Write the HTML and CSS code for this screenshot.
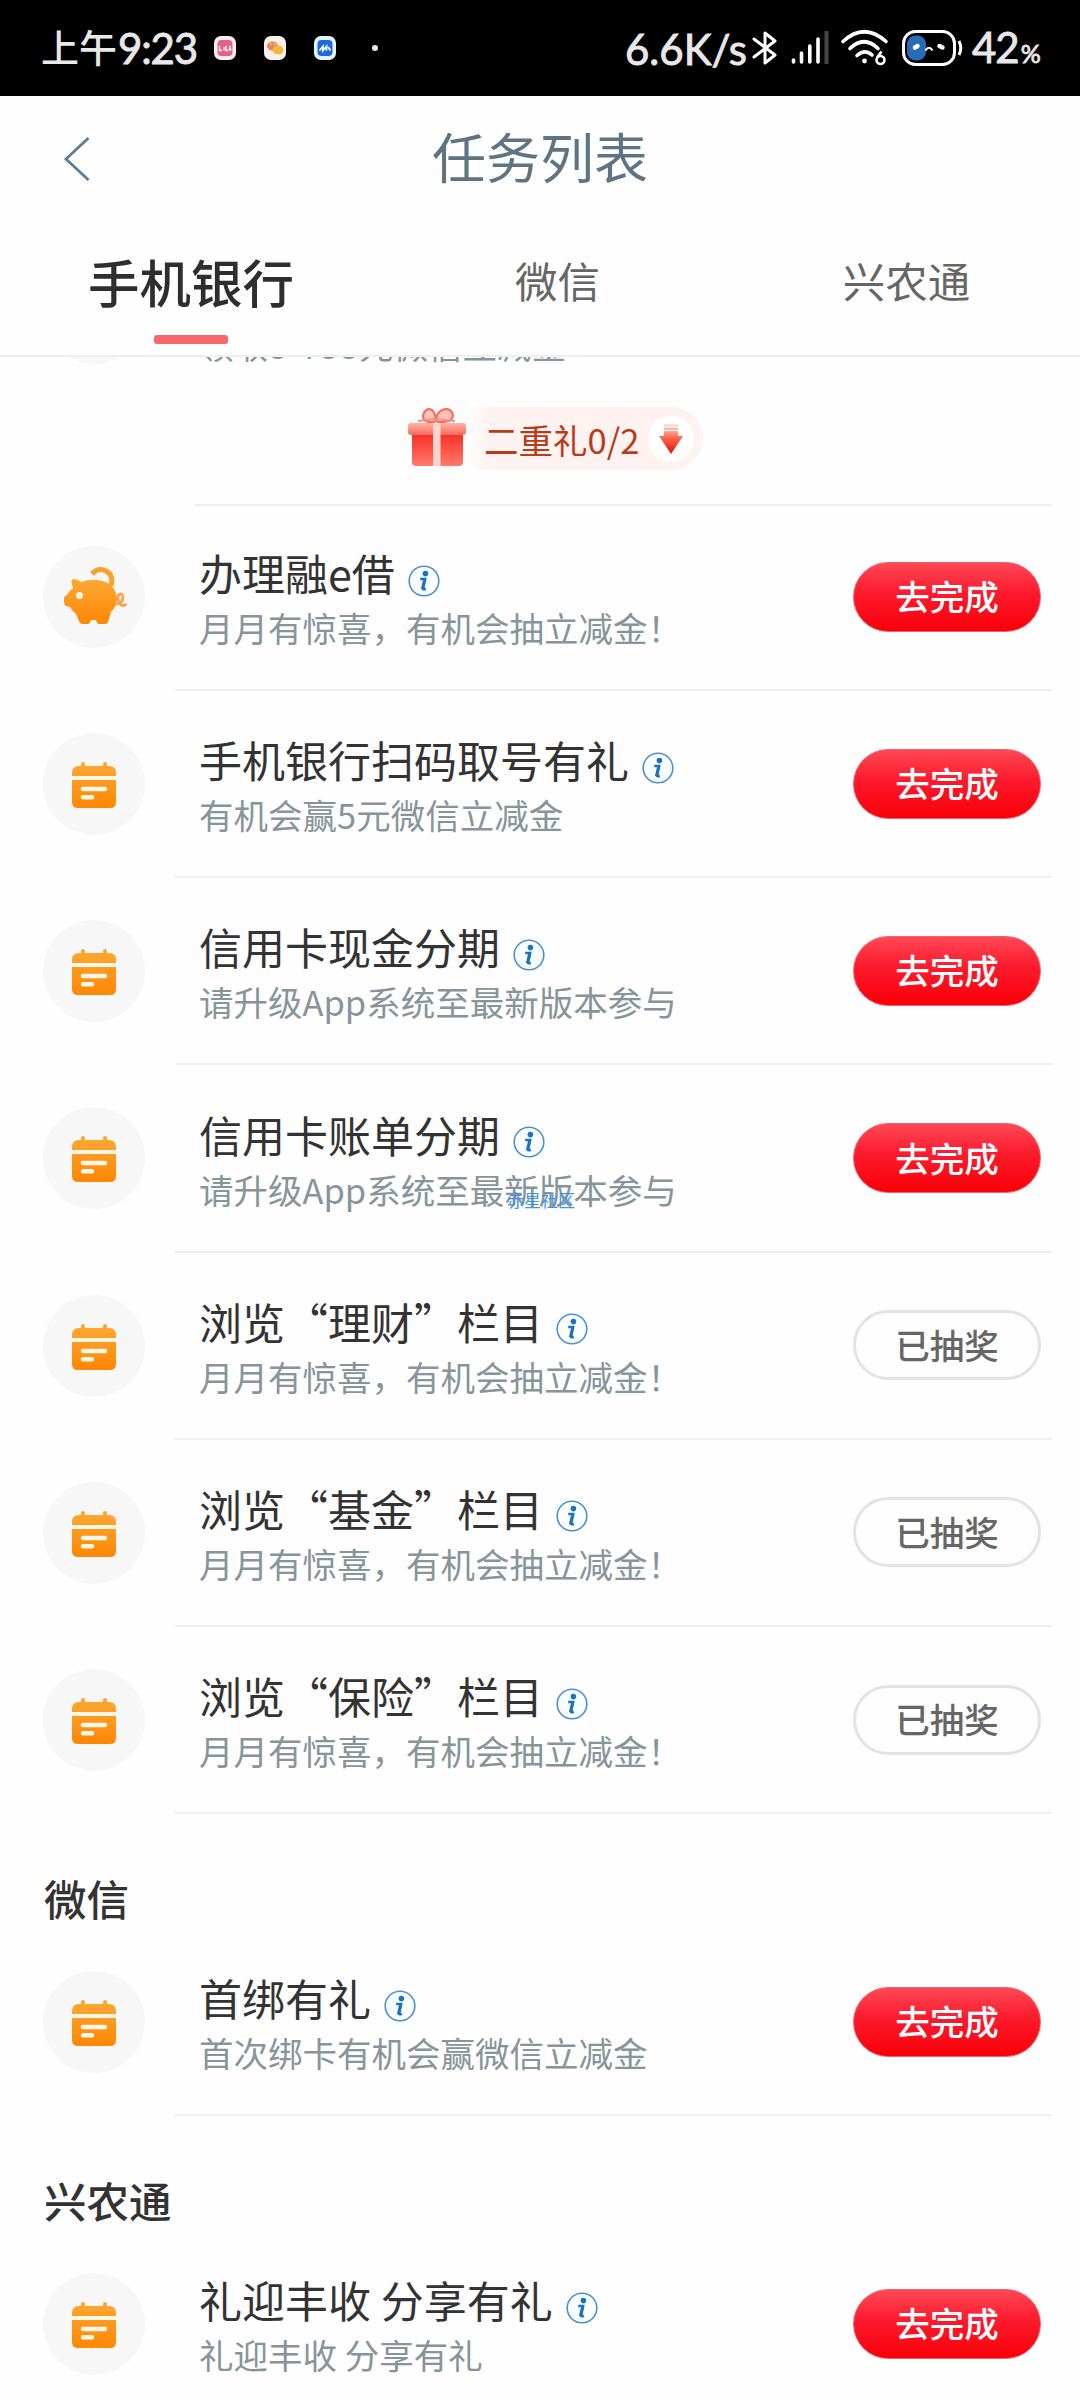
FILE: index.html
```html
<!DOCTYPE html>
<html lang="zh-CN">
<head>
<meta charset="utf-8">
<title>任务列表</title>
<link rel="stylesheet" href="styles.css">
</head>
<body>
<svg class="defs" width="0" height="0" aria-hidden="true">
  <defs>
    <linearGradient id="orange" x1="0" y1="0" x2="0" y2="1"><stop offset="0" stop-color="#fba935"/><stop offset="1" stop-color="#fe8703"/></linearGradient>
    <linearGradient id="lid" x1="0" y1="0" x2="0" y2="1"><stop offset="0" stop-color="#ffb3a6"/><stop offset="1" stop-color="#fb6a5c"/></linearGradient>
    <linearGradient id="box" x1="0" y1="0" x2="0" y2="1"><stop offset="0" stop-color="#f92a22"/><stop offset="1" stop-color="#ff7a6c"/></linearGradient>
    <linearGradient id="arrow" x1="0" y1="0" x2="0" y2="1"><stop offset="0" stop-color="#ffe3dc"/><stop offset=".45" stop-color="#fb6a50"/><stop offset="1" stop-color="#e80f05"/></linearGradient>
  </defs>
  <symbol id="calendar" viewBox="0 0 44 46">
    <path fill="url(#orange)" d="M9 4V2Q9 0 11 0T13 2V4H31V2Q31 0 33 0T35 2V4H37Q44 4 44 11V40Q44 46 38 46H6Q0 46 0 40V11Q0 4 7 4Z"/>
    <path fill="#fff6e6" d="M0 14H44V18H0Z"/>
    <path stroke="#fff8e8" stroke-width="4.4" stroke-linecap="round" d="M11 27H33M11 35.3H20"/>
  </symbol>
  <symbol id="info" viewBox="0 0 32 32">
    <circle cx="16" cy="16" r="14.8" fill="#fafdff" stroke="#4c91c9" stroke-width="1.6"/>
    <circle cx="17.4" cy="8.6" r="2.8" fill="#1c73bd"/>
    <path d="M12.2 14H17L15 23.5Q14.8 25 17.8 23.7" fill="none" stroke="#1c73bd" stroke-width="2.6"/>
    <path d="M15.3 14H18.4L16 24H12.9Z" fill="#1c73bd"/>
  </symbol>
  <symbol id="pig" viewBox="0 0 64 58">
    <path d="M28 7Q34 0 42 4Q50 8 47 19" fill="none" stroke="#fba02c" stroke-width="5"/>
    <path fill="url(#orange)" d="M9 12Q14 12 17 15Q31 10 44 16Q52 21 53 32Q53 39 47 45L44 55Q43 57 41 57H35Q33 57 32 53H27Q26 57 24 57H18Q16 57 15 54L12 47Q8 44 6 40L2 39Q0 38 0 35V31Q0 29 3 28Q5 24 9 21Q6 13 9 12Z"/>
    <circle cx="15.5" cy="28.5" r="3.6" fill="#fff6e8"/>
    <path d="M51 37Q59 37 59 30Q58 25 54.500 28Q52.500 32 56 37Q59 40 62.500 37" fill="none" stroke="#fba24a" stroke-width="2.8"/>
  </symbol>
</svg>

<header class="status">
  <span class="status-time">上午<span class="latin">9:23</span></span>
  <svg class="app-icon" viewBox="0 0 22 24"><rect width="22" height="24" rx="7" fill="#fbeef3"/><rect x="3.5" y="4" width="15" height="16" rx="4" fill="#e5608f"/><path d="M5.5 10V14.5H8M10 11V14.5M12 10V14.5H14M15 14.5L16 11L17 14.5" fill="none" stroke="#fff" stroke-width="1.3"/></svg>
  <svg class="app-icon" viewBox="0 0 22 24"><rect width="22" height="24" rx="7" fill="#fbf1ec"/><ellipse cx="8.5" cy="10" rx="5.5" ry="4.6" fill="#e28a55"/><ellipse cx="14" cy="14" rx="5.5" ry="4.6" fill="#f8b53b"/><path d="M6 8H7.5M10 8H11.5" stroke="#fff" stroke-width="1.2"/></svg>
  <svg class="app-icon" viewBox="0 0 22 24"><rect width="22" height="24" rx="7" fill="#eaf3fd"/><rect x="3.5" y="4" width="15" height="16" rx="4" fill="#1b6be0"/><path d="M5.5 14.5L9 10.5V14.5L12.5 10.5V14.5M14 11L16.5 14.5" fill="none" stroke="#fff" stroke-width="1.8"/></svg>
  <i class="more-dot"></i>
  <span class="speed">6.6K/s</span>
  <svg class="bt" viewBox="0 0 24 34"><path d="M1 8L22 24L12 32V2L22 10L1 26" fill="none" stroke="#fff" stroke-width="3" stroke-linejoin="round" stroke-linecap="round"/></svg>
  <svg class="signal" viewBox="0 0 38 34"><path d="M2.5 29V31M10.5 22V31M18.8 15V31M27 8V31" stroke="#fff" stroke-width="3.6" stroke-linecap="round"/><path d="M35.5 0V33" stroke="#444" stroke-width="4"/></svg>
  <svg class="wifi" viewBox="0 0 48 38"><g fill="none" stroke="#fff" stroke-width="3.6" stroke-linecap="round"><path d="M2 12.5Q23 -7 45 12.5M9 19.5Q23 6 37 19.5M16 26.5Q24 19.5 31 26"/></g><circle cx="23.5" cy="32" r="2.4" fill="#fff"/><circle cx="39.5" cy="31" r="4" fill="none" stroke="#fff" stroke-width="2.6"/><path d="M36 29L40.5 22.5" stroke="#fff" stroke-width="2.8"/></svg>
  <svg class="battery" viewBox="0 0 62 36"><rect x="1.5" y="1.5" width="51" height="33" rx="12" fill="none" stroke="#fff" stroke-width="3"/><rect x="5" y="5.5" width="19" height="25" rx="8.5" fill="#286cb6"/><path d="M13 17.500L15.500 16M37.500 16L40.500 17.500" stroke="#fff" stroke-width="4.500" stroke-linecap="round"/><path d="M23.500 20.500Q27 15 30.500 20.500" fill="none" stroke="#fff" stroke-width="2.200"/><path d="M57 11Q60.500 18 57 25" fill="none" stroke="#fff" stroke-width="3"/></svg>
  <span class="level">42<small>%</small></span>
</header>

<nav class="title-bar">
  <svg class="back" viewBox="0 0 26 44"><path d="M24.500 1L2 22L24.500 43" fill="none" stroke="#5b7f99" stroke-width="2.800"/></svg>
  <h1>任务列表</h1>
</nav>

<div class="tabs">
  <div class="tab active">手机银行</div>
  <div class="tab second">微信</div>
  <div class="tab third">兴农通</div>
</div>

<main class="list">
  <article class="task scrolled">
    <span class="badge"></span>
    <div class="body">
      <div class="text"><p>领取<span class="range">8-188</span>元微信立减金</p></div>
    </div>
  </article>
  <div class="gift">
    <svg class="gift-box" viewBox="0 0 58 59">
      <path d="M27 14Q14 15 15 7Q18 -1 24 2Q28 6 28 14Q28 5 34 2Q43 -1 45 7Q45 15 29 14" fill="#ffc4b8" stroke="#f4705f" stroke-width="2.200"/>
      <path d="M10 13L27 11L47 13" fill="none" stroke="#ee9184" stroke-width="2"/>
      <rect x="4" y="24" width="51" height="34" rx="4" fill="url(#box)"/>
      <rect x="0" y="15" width="58" height="12" rx="3" fill="url(#lid)"/>
      <rect x="25" y="15" width="7.500" height="43" fill="#ffd5cd"/>
    </svg>
    <div class="gift-pill"><span>二重礼0/2</span>
      <b class="down"><svg viewBox="0 0 24 32"><path fill="url(#arrow)" d="M5 1H19V13H24L12 31L0 13H5Z"/><path d="M4 4H20M4 7.500H20" stroke="#fff" stroke-width="1"/></svg></b>
    </div>
  </div>
  <hr class="rule">

  <article class="task">
    <span class="badge"><svg class="pig"><use href="#pig"/></svg></span>
    <div class="body">
      <div class="text"><h2>办理融e借<svg class="info"><use href="#info"/></svg></h2><p>月月有惊喜，有机会抽立减金！</p></div>
      <button class="go">去完成</button>
    </div>
  </article>
  <article class="task">
    <span class="badge"><svg class="cal"><use href="#calendar"/></svg></span>
    <div class="body">
      <div class="text"><h2>手机银行扫码取号有礼<svg class="info"><use href="#info"/></svg></h2><p>有机会赢5元微信立减金</p></div>
      <button class="go">去完成</button>
    </div>
  </article>
  <article class="task">
    <span class="badge"><svg class="cal"><use href="#calendar"/></svg></span>
    <div class="body">
      <div class="text"><h2>信用卡现金分期<svg class="info"><use href="#info"/></svg></h2><p>请升级App系统至最新版本参与</p></div>
      <button class="go">去完成</button>
    </div>
  </article>
  <article class="task">
    <span class="badge"><svg class="cal"><use href="#calendar"/></svg></span>
    <div class="body">
      <div class="text"><h2>信用卡账单分期<svg class="info"><use href="#info"/></svg></h2><p>请升级App系统至最新版本参与</p><span class="watermark">赤星社区</span></div>
      <button class="go">去完成</button>
    </div>
  </article>
  <article class="task">
    <span class="badge"><svg class="cal"><use href="#calendar"/></svg></span>
    <div class="body">
      <div class="text"><h2>浏览“理财”栏目<svg class="info"><use href="#info"/></svg></h2><p>月月有惊喜，有机会抽立减金！</p></div>
      <button class="done">已抽奖</button>
    </div>
  </article>
  <article class="task">
    <span class="badge"><svg class="cal"><use href="#calendar"/></svg></span>
    <div class="body">
      <div class="text"><h2>浏览“基金”栏目<svg class="info"><use href="#info"/></svg></h2><p>月月有惊喜，有机会抽立减金！</p></div>
      <button class="done">已抽奖</button>
    </div>
  </article>
  <article class="task">
    <span class="badge"><svg class="cal"><use href="#calendar"/></svg></span>
    <div class="body">
      <div class="text"><h2>浏览“保险”栏目<svg class="info"><use href="#info"/></svg></h2><p>月月有惊喜，有机会抽立减金！</p></div>
      <button class="done">已抽奖</button>
    </div>
  </article>

  <h3>微信</h3>
  <article class="task">
    <span class="badge"><svg class="cal"><use href="#calendar"/></svg></span>
    <div class="body">
      <div class="text"><h2>首绑有礼<svg class="info"><use href="#info"/></svg></h2><p>首次绑卡有机会赢微信立减金</p></div>
      <button class="go">去完成</button>
    </div>
  </article>

  <h3>兴农通</h3>
  <article class="task">
    <span class="badge"><svg class="cal"><use href="#calendar"/></svg></span>
    <div class="body">
      <div class="text"><h2>礼迎丰收 分享有礼<svg class="info"><use href="#info"/></svg></h2><p>礼迎丰收 分享有礼</p></div>
      <button class="go">去完成</button>
    </div>
  </article>
</main>
</body>
</html>
```

FILE: styles.css
```css
* { box-sizing: border-box; margin: 0; padding: 0; }
body {
  width: 1080px;
  height: 2400px;
  overflow: hidden;
  display: flex;
  flex-direction: column;
  background: #fefefe;
  color: #333;
  font-family: "Noto Sans CJK SC", sans-serif;
}
svg { display: block; flex: none; overflow: visible; }
.defs { position: absolute; }
h1, h2, h3, p, span, div { white-space: nowrap; }

.status {
  flex: none;
  height: 96px;
  display: flex;
  align-items: center;
  padding-left: 41px;
  background: #000;
  color: #e8e8e8;
}
.status-time { width: 173px; font-size: 38px; font-weight: 500; line-height: 56px; margin-top: -4px; display: flex; align-items: center; }
.latin, .speed, .level { font-family: Lato, sans-serif; font-size: 42px; font-weight: 400; line-height: 50px; -webkit-text-stroke: 0.9px #e8e8e8; }
.latin { letter-spacing: -1.2px; margin-left: 1px; margin-top: 4px; }
.app-icon { width: 22px; height: 24px; margin-right: 28px; }
.more-dot { width: 6px; height: 6px; margin-left: 8px; border-radius: 50%; background: #e8e8e8; }
.speed { width: 128px; margin-left: 247px; margin-top: 2px; }
.bt { width: 24px; height: 34px; }
.signal { width: 38px; height: 34px; margin-left: 14px; }
.wifi { width: 48px; height: 38px; margin-left: 12px; }
.battery { width: 62px; height: 36px; margin-left: 13px; }
.level { margin-left: 8px; margin-top: 3px; letter-spacing: -1px; }
.level small { font-size: 25px; margin-left: 2px; }

.title-bar {
  flex: none;
  height: 120px;
  display: grid;
  grid-template-columns: 190px 1fr 190px;
  align-items: center;
}
.back { width: 26px; height: 44px; margin-left: 64px; margin-top: 6px; }
h1 { font-size: 54px; font-weight: 400; line-height: 80px; text-align: center; color: #5f7482; }

.tabs {
  flex: none;
  height: 141px;
  display: flex;
  border-bottom: 2px solid #edf0f0;
}
.tab { height: 128px; font-size: 42.500px; line-height: 128px; color: #666; text-align: center; }
.tab.active { width: 382px; font-size: 51.500px; line-height: 129px; font-weight: 500; color: #2e2e2e; display: flex; flex-direction: column; align-items: center; }
.tab.active::after { content: ""; flex: none; width: 74px; height: 9px; margin-top: -10px; border-radius: 3px; background: #f5696d; }
.tab.second { width: 351px; }
.tab.third { width: 347px; padding-left: 0; }

.list { flex: 1; min-height: 0; overflow: hidden; }
.task { height: 187.170px; display: flex; align-items: stretch; padding-right: 28px; }
.badge { flex: none; width: 102px; height: 102px; margin: 42px 30px 0 43px; border-radius: 50%; background: #f7f7f7; display: flex; align-items: center; justify-content: center; }
.cal { width: 44px; height: 46px; margin-top: 2px; }
.pig { width: 64px; height: 58px; margin-left: 3px; margin-top: -2px; }
.body { flex: 1; display: flex; justify-content: space-between; align-items: center; padding: 0 11px 0 24px; border-bottom: 2px solid #f0f0f0; }
.text { position: relative; margin-top: 7px; }
h2 { display: flex; align-items: center; font-size: 43px; font-weight: 400; line-height: 55px; color: #333; }
p { font-size: 34.500px; line-height: 55px; color: #87959a; }
.info { width: 32px; height: 32px; margin-left: 13px; margin-top: 16px; }
button { width: 188px; height: 70px; border-radius: 35px; font: 500 34.500px/64px "Noto Sans CJK SC", sans-serif; padding-bottom: 3px; }
.go { border: 1px solid #f2606c; background: linear-gradient(#ff4855, #fc1a2d 45%, #f90008); color: #fff; }
.done { border: 3px solid #e3e3e3; background: #fefefe; color: #666; line-height: 60px; }
.watermark { position: absolute; left: 308px; top: 81px; font-size: 17px; line-height: 24px; color: #3f94ea; }

.scrolled { height: 187px; margin-top: -137px; }
.scrolled .body { border-bottom: 0; }
.scrolled p { margin-top: 57px; }
.range { font-family: Roboto, sans-serif; letter-spacing: 0.800px; }
.gift { height: 100px; display: flex; align-items: flex-start; padding-left: 408px; }
.gift-box { width: 58px; height: 59px; margin-top: 1px; }
.gift-pill { width: 237px; height: 63px; padding-left: 18px; display: flex; align-items: center; border-radius: 0 32px 32px 0; background: linear-gradient(90deg, #fefefe, #fff3f1 24px); font-size: 34.500px; line-height: 63px; color: #b83b1d; }
.gift-pill span { margin-top: 2px; }
.down { width: 46px; height: 46px; margin-left: 9px; border-radius: 50%; background: #fff; display: flex; align-items: center; justify-content: center; }
.down svg { width: 24px; height: 32px; }
.rule { height: 2px; margin: -3px 28px -2px 195px; border: 0; background: #ecefef; }

h3 { height: 115px; padding: 52px 0 0 44px; font-size: 42.500px; font-weight: 500; line-height: 63px; color: #333; }
```
